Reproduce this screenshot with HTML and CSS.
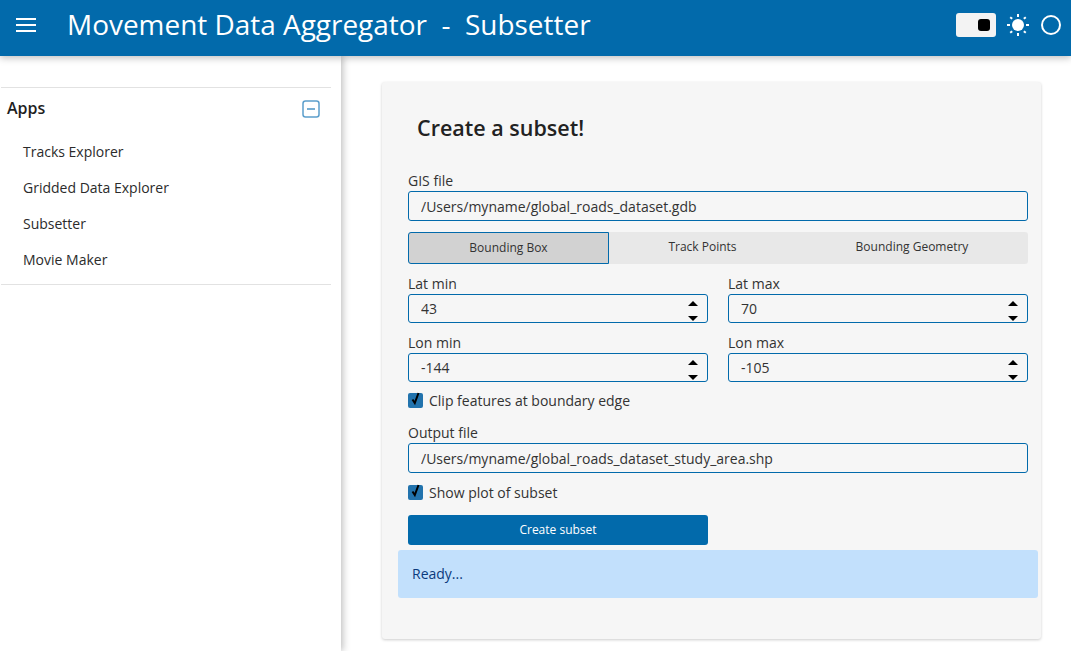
FILE: index.html
```html
<!DOCTYPE html>
<html lang="en">
<head>
  <meta charset="UTF-8">
  <meta name="viewport" content="width=device-width, initial-scale=1.0">
  <title>Movement Data Aggregator - Subsetter</title>
  <link rel="stylesheet" href="styles.css">
</head>
<body>
  <header class="topbar">
    <svg class="menu-icon" width="20" height="14" viewBox="0 0 20 14"><path d="M0 1h20M0 7h20M0 13h20" stroke="#fff" stroke-width="1.8"/></svg>
    <h1 class="app-title">Movement Data Aggregator&nbsp; -&nbsp; Subsetter</h1>
    <div class="topbar-tools">
      <div class="theme-switch"><span class="theme-knob"></span></div>
      <svg class="sun-icon" width="24" height="24" viewBox="0 0 24 24">
        <circle cx="12" cy="12" r="6" fill="#fff"/>
        <path d="M12 1v3M12 20v3M1 12h3M20 12h3M4.2 4.2l2 1.6M17.8 18.2l2 1.6M4.2 19.8l2-1.6M17.8 5.8l2-1.6" stroke="#fff" stroke-width="2"/>
      </svg>
      <span class="status-ring"></span>
    </div>
  </header>

  <div class="layout">
    <aside class="sidebar">
      <div class="nav-group">
        <div class="nav-head">
          <span>Apps</span>
          <svg width="18" height="18" viewBox="0 0 18 18"><rect x="1" y="1" width="16" height="16" rx="2.5" fill="none" stroke="#5c9fcc" stroke-width="1.5"/><path d="M5 9h8" stroke="#4a93c4" stroke-width="1.5"/></svg>
        </div>
        <ul class="nav-list">
          <li>Tracks Explorer</li>
          <li>Gridded Data Explorer</li>
          <li>Subsetter</li>
          <li>Movie Maker</li>
        </ul>
      </div>
    </aside>

    <main class="content">
      <section class="card">
        <h2 class="card-title">Create a subset!</h2>

        <div class="form">
          <label class="field field-gis">
            <span class="field-label">GIS file</span>
            <input class="text-input" type="text" value="/Users/myname/global_roads_dataset.gdb">
          </label>

          <div class="tabs">
            <div class="tab tab-active">Bounding Box</div>
            <div class="tab tab-track">Track Points</div>
            <div class="tab tab-geom">Bounding Geometry</div>
          </div>

          <div class="num-grid">
            <label class="field">
              <span class="field-label">Lat min</span>
              <span class="num-wrap"><input class="text-input num-input" type="text" value="43"><span class="spin"></span></span>
            </label>
            <label class="field">
              <span class="field-label">Lat max</span>
              <span class="num-wrap"><input class="text-input num-input" type="text" value="70"><span class="spin"></span></span>
            </label>
            <label class="field">
              <span class="field-label">Lon min</span>
              <span class="num-wrap"><input class="text-input num-input" type="text" value="-144"><span class="spin"></span></span>
            </label>
            <label class="field">
              <span class="field-label">Lon max</span>
              <span class="num-wrap"><input class="text-input num-input" type="text" value="-105"><span class="spin"></span></span>
            </label>
          </div>

          <div class="check-row check-clip">
            <span class="check-box"><svg width="16" height="16" viewBox="0 0 16 16"><path d="M4.5 8.5l2.3 3.5L10.5 2" fill="none" stroke="#000" stroke-width="2"/></svg></span>
            <span>Clip features at boundary edge</span>
          </div>

          <label class="field field-output">
            <span class="field-label">Output file</span>
            <input class="text-input" type="text" value="/Users/myname/global_roads_dataset_study_area.shp">
          </label>

          <div class="check-row check-plot">
            <span class="check-box"><svg width="16" height="16" viewBox="0 0 16 16"><path d="M4.5 8.5l2.3 3.5L10.5 2" fill="none" stroke="#000" stroke-width="2"/></svg></span>
            <span>Show plot of subset</span>
          </div>

          <button class="primary-btn" type="button">Create subset</button>
        </div>

        <div class="status-box">Ready...</div>
      </section>
    </main>
  </div>
</body>
</html>
```

FILE: styles.css
```css
* {
  box-sizing: border-box;
}
html, body {
  height: 100%;
}
body {
  margin: 0;
  overflow: hidden;
  font-family: "Open Sans", sans-serif;
  font-size: 14px;
  color: #222;
  background: #fff;
}

/* Top bar */
.topbar {
  position: relative;
  z-index: 2;
  display: flex;
  align-items: center;
  height: 56px;
  padding: 0 10px 0 16px;
  background: #026aab;
  box-shadow: 0 2px 7px rgba(0, 0, 0, 0.25);
}
.menu-icon {
  margin-bottom: 7px;
}
.app-title {
  margin: 0 0 8px 31px;
  font-size: 27.95px;
  font-weight: 400;
  color: #fff;
}
.topbar-tools {
  display: flex;
  align-items: center;
  margin-left: auto;
  margin-bottom: 7px;
}
.theme-switch {
  display: flex;
  align-items: center;
  justify-content: flex-end;
  width: 40px;
  height: 24px;
  padding-right: 6px;
  border-radius: 3px;
  background: #f3f3f3;
}
.theme-knob {
  width: 12px;
  height: 12px;
  border-radius: 3px;
  background: #000;
}
.sun-icon {
  margin-left: 10px;
}
.status-ring {
  width: 20px;
  height: 20px;
  margin-left: 11px;
  border: 2px solid #fff;
  border-radius: 50%;
}

/* Page columns */
.layout {
  display: flex;
  height: 595px;
}
.sidebar {
  width: 341px;
  flex-shrink: 0;
  padding: 31px 10px 0 1px;
  background: #fff;
  box-shadow: 2px 0 7px rgba(0, 0, 0, 0.25);
}
.nav-group {
  border-top: 1px solid #e2e2e2;
  border-bottom: 1px solid #e2e2e2;
  padding-bottom: 11px;
}
.nav-head {
  display: flex;
  align-items: center;
  justify-content: space-between;
  height: 41px;
  padding: 0 11px 0 6px;
  font-size: 16px;
  font-weight: 600;
  color: #1f1f1f;
}
.nav-head span {
  margin-bottom: 2px;
}
.nav-list {
  list-style: none;
  margin: 0;
  padding: 0;
}
.nav-list li {
  height: 36px;
  padding: 0 0 0 22px;
  line-height: 45px;
  color: #2b2b2b;
}

/* Main card */
.content {
  flex: 1;
  padding: 26px 30px 0 41px;
}
.card {
  width: 659px;
  height: 557px;
  padding: 0 3px 0 16px;
  border-radius: 3px;
  background: #f6f6f6;
  box-shadow: 0 1px 3px rgba(0, 0, 0, 0.2);
}
.card-title {
  margin: 0;
  padding: 31px 0 0 19px;
  font-size: 21.5px;
  line-height: 30px;
  font-weight: 600;
  color: #222;
}
.form {
  width: 620px;
  margin: 0 0 0 10px;
  padding-top: 28px;
}
.field {
  display: block;
}
.field-label {
  display: block;
  height: 20px;
  line-height: 20px;
  color: #333;
}
.text-input {
  display: block;
  width: 100%;
  height: 30px;
  padding: 0 12px;
  border: 1px solid #026aab;
  border-radius: 3px;
  background: #f6f6f6;
  font-family: "Open Sans", sans-serif;
  font-size: 14px;
  color: #333;
}

/* Tabs */
.tabs {
  display: flex;
  height: 32px;
  margin-top: 11px;
  border-radius: 3px;
  background: #e8e8e8;
  font-size: 12px;
  color: #333;
}
.tab {
  line-height: 29px;
  text-align: center;
}
.tab-active {
  width: 201px;
  border: 1px solid #026aab;
  border-radius: 3px 0 0 3px;
  background: #d2d2d2;
}
.tab-track {
  width: 187px;
}
.tab-geom {
  flex: 1;
}

/* Number inputs */
.num-grid {
  display: grid;
  grid-template-columns: 300px 300px;
  column-gap: 20px;
  row-gap: 10px;
  margin-top: 10px;
}
.num-wrap {
  position: relative;
  display: block;
}
.num-input {
  height: 29px;
}
.spin {
  position: absolute;
  top: 7px;
  right: 10px;
  height: 21px;
  width: 10px;
}
.spin::before, .spin::after {
  content: "";
  position: absolute;
  left: 0;
  border-left: 5px solid transparent;
  border-right: 5px solid transparent;
}
.spin::before {
  top: 0;
  border-bottom: 5px solid #000;
}
.spin::after {
  top: 15px;
  border-top: 5px solid #000;
}

/* Checkboxes */
.check-row {
  display: flex;
  align-items: center;
  height: 20px;
  color: #333;
}
.check-box {
  width: 15px;
  height: 15px;
  margin-right: 6px;
  border-radius: 2px;
  background: #2273ad;
  line-height: 0;
}
.check-box svg {
  margin-top: -2px;
}
.check-clip {
  margin-top: 8px;
}
.field-output {
  margin-top: 13px;
}
.check-plot {
  margin-top: 9px;
}

.primary-btn {
  display: block;
  width: 300px;
  height: 30px;
  margin-top: 13px;
  padding-bottom: 2px;
  border: none;
  border-radius: 3px;
  background: #026aab;
  font-family: "Open Sans", sans-serif;
  font-size: 12px;
  font-weight: 500;
  color: #fff;
}
.status-box {
  width: 640px;
  height: 48px;
  margin-top: 5px;
  padding-left: 14px;
  border-radius: 3px;
  background: #c2e0fc;
  line-height: 48px;
  color: #0b3a7c;
}
```
